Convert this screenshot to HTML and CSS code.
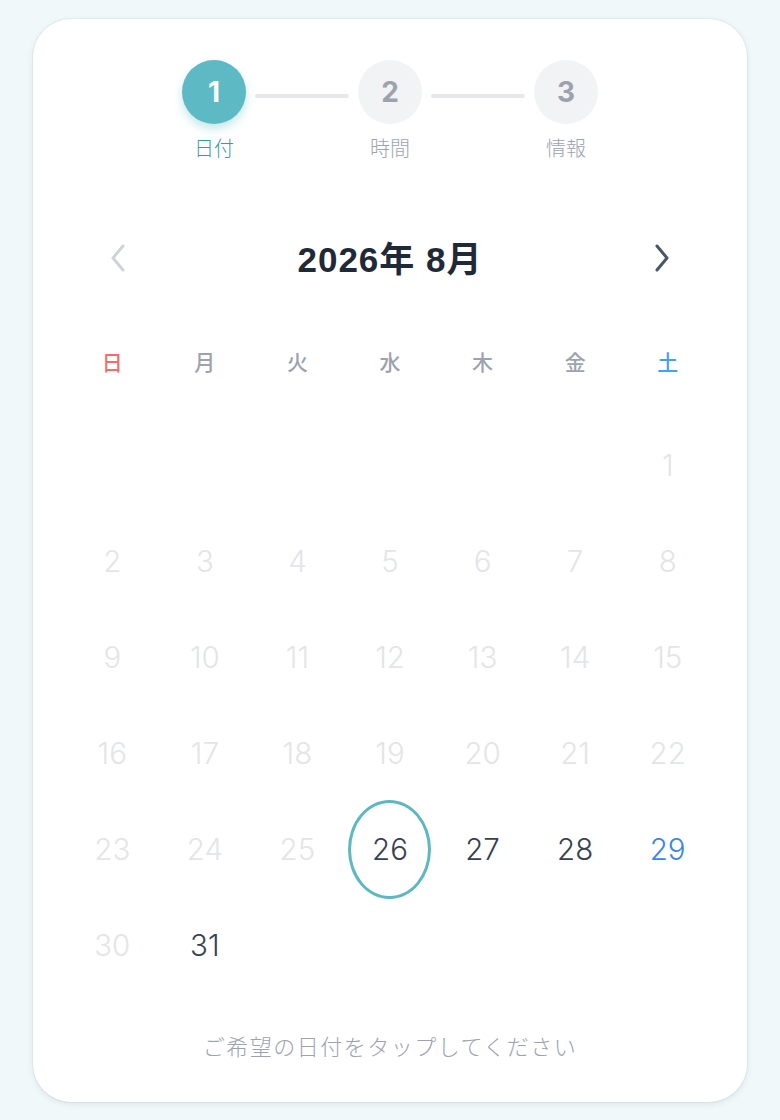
FILE: index.html
```html
<!DOCTYPE html>
<html lang="ja">
<head>
<meta charset="utf-8">
<title>日付選択</title>
<link rel="stylesheet" href="styles.css">
</head>
<body>
<div class="card">
  <div class="steps">
    <div class="step active">
      <div class="circle">1</div>
      <div class="label">日付</div>
    </div>
    <div class="line"></div>
    <div class="step">
      <div class="circle">2</div>
      <div class="label">時間</div>
    </div>
    <div class="line"></div>
    <div class="step">
      <div class="circle">3</div>
      <div class="label">情報</div>
    </div>
  </div>

  <div class="month">
    <button class="nav prev" aria-label="前の月">
      <svg width="16" height="28" viewBox="0 0 16 28"><path d="M13 2 L3 14 L13 26" fill="none" stroke="currentColor" stroke-width="3" stroke-linecap="round" stroke-linejoin="round"/></svg>
    </button>
    <div class="title">2026年 8月</div>
    <button class="nav next" aria-label="次の月">
      <svg width="16" height="28" viewBox="0 0 16 28"><path d="M3 2 L13 14 L3 26" fill="none" stroke="currentColor" stroke-width="3" stroke-linecap="round" stroke-linejoin="round"/></svg>
    </button>
  </div>

  <div class="weekdays">
    <div class="wd sun">日</div>
    <div class="wd">月</div>
    <div class="wd">火</div>
    <div class="wd">水</div>
    <div class="wd">木</div>
    <div class="wd">金</div>
    <div class="wd sat">土</div>
  </div>

  <div class="days">
    <div class="day"></div><div class="day"></div><div class="day"></div><div class="day"></div><div class="day"></div><div class="day"></div>
    <div class="day off"><span>1</span></div>
    <div class="day off"><span>2</span></div>
    <div class="day off"><span>3</span></div>
    <div class="day off"><span>4</span></div>
    <div class="day off"><span>5</span></div>
    <div class="day off"><span>6</span></div>
    <div class="day off"><span>7</span></div>
    <div class="day off"><span>8</span></div>
    <div class="day off"><span>9</span></div>
    <div class="day off"><span>10</span></div>
    <div class="day off"><span>11</span></div>
    <div class="day off"><span>12</span></div>
    <div class="day off"><span>13</span></div>
    <div class="day off"><span>14</span></div>
    <div class="day off"><span>15</span></div>
    <div class="day off"><span>16</span></div>
    <div class="day off"><span>17</span></div>
    <div class="day off"><span>18</span></div>
    <div class="day off"><span>19</span></div>
    <div class="day off"><span>20</span></div>
    <div class="day off"><span>21</span></div>
    <div class="day off"><span>22</span></div>
    <div class="day off"><span>23</span></div>
    <div class="day off"><span>24</span></div>
    <div class="day off"><span>25</span></div>
    <div class="day selected"><span>26</span></div>
    <div class="day"><span>27</span></div>
    <div class="day"><span>28</span></div>
    <div class="day sat"><span>29</span></div>
    <div class="day off"><span>30</span></div>
    <div class="day"><span>31</span></div>
  </div>

  <p class="hint">ご希望の日付をタップしてください</p>
</div>
</body>
</html>
```

FILE: styles.css
```css
html, body {
  margin: 0;
  padding: 0;
}
body {
  background: #f0f8fa;
  font-family: "Liberation Sans", "Noto Sans CJK JP", sans-serif;
  padding: 19px 33px 17px;
}
.card {
  background: #ffffff;
  border-radius: 38px;
  box-shadow: 0 2px 6px rgba(60, 80, 90, 0.12), 0 0 0 1px rgba(200, 215, 220, 0.25);
  padding: 41px 33px 41px;
  box-sizing: border-box;
  height: 1083px;
}
.steps {
  display: flex;
  justify-content: center;
  align-items: flex-start;
}
.step {
  display: flex;
  flex-direction: column;
  align-items: center;
  width: 64px;
}
.circle {
  width: 64px;
  height: 64px;
  border-radius: 50%;
  background: #f2f3f5;
  color: #9ca3af;
  font-family: "Inter", "Liberation Sans", sans-serif;
  font-weight: 700;
  font-size: 28px;
  display: flex;
  align-items: center;
  justify-content: center;
}
.step.active .circle {
  background: #5dbac4;
  color: #ffffff;
  box-shadow: 0 5px 10px rgba(93, 186, 196, 0.35);
}
.label {
  margin-top: 10px;
  font-family: "Noto Sans CJK JP", sans-serif;
  font-size: 20px;
  line-height: 28px;
  color: #9ca3af;
  font-weight: 300;
  white-space: nowrap;
}
.step.active .label {
  color: #3a9aa5;
}
.line {
  width: 94px;
  height: 4px;
  border-radius: 2px;
  background: #e5e7eb;
  margin: 34px 9px 0;
}
.month {
  margin-top: 76px;
  height: 40px;
  display: flex;
  align-items: center;
  justify-content: space-between;
  padding: 0 44px 0 44px;
}
.nav {
  border: 0;
  background: none;
  padding: 0;
  width: 16px;
  height: 28px;
  display: flex;
  align-items: center;
  justify-content: center;
  cursor: pointer;
}
.nav.prev { color: #cfd3d9; }
.nav.next { color: #4b5563; }
.title {
  font-family: "Liberation Sans", "Noto Sans CJK JP", sans-serif;
  font-weight: 700;
  font-size: 35px;
  letter-spacing: 1px;
  color: #1f2937;
  margin-top: -4px;
}
.weekdays {
  margin-top: 63px;
  display: grid;
  grid-template-columns: repeat(7, 1fr);
  height: 40px;
  align-items: center;
}
.wd {
  text-align: center;
  font-family: "Noto Sans CJK JP", sans-serif;
  font-weight: 500;
  font-size: 21px;
  color: #9ca3af;
}
.wd.sun { color: #f26d6d; }
.wd.sat { color: #4a9ef0; }
.days {
  margin-top: 36px;
  display: grid;
  grid-template-columns: repeat(7, 1fr);
  grid-auto-rows: 96px;
}
.day {
  display: flex;
  align-items: center;
  justify-content: center;
  font-family: "Inter", "Liberation Sans", sans-serif;
  font-weight: 300;
  font-size: 29.5px;
  color: #374151;
}
.day span {
  display: flex;
  align-items: center;
  justify-content: center;
  width: 83px;
  height: 99px;
  box-sizing: border-box;
  border-radius: 50%;
  flex: none;
}
.day.off { color: #e3e5e8; }
.day.sat { color: #3a86e8; }
.day.selected span {
  border: 3.5px solid #5db8c2;
}
.hint {
  margin: 38px 0 0;
  text-align: center;
  font-family: "Noto Sans CJK JP", sans-serif;
  font-weight: 300;
  font-size: 22px;
  letter-spacing: 1.5px;
  line-height: 28px;
  color: #9ca3af;
}
```
